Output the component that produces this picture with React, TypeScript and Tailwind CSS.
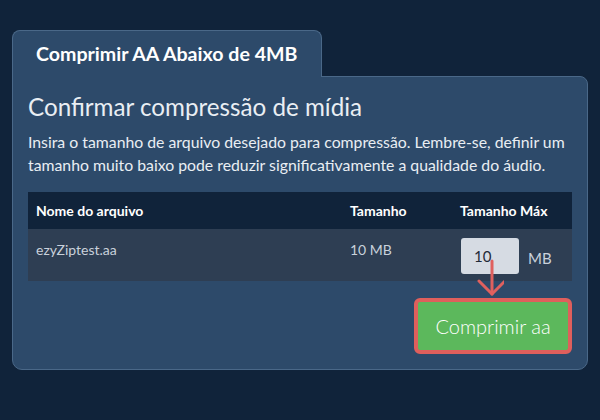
export default function App() {
  return (
    <div
      className="min-h-[420px] bg-[#10233a] px-[12px] pt-[30px] text-[#e9eef3]"
      style={{ fontFamily: "Lato, 'Open Sans', sans-serif" }}
    >
      {/* Tab */}
      <div className="relative z-10 -mb-px flex h-[47px] w-[310px] items-center rounded-t-lg border border-b-0 border-[#4a6888] bg-[#2d4a6a] pl-[23px]">
        <h1 className="text-[19.6px] font-bold text-white">Comprimir AA Abaixo de 4MB</h1>
      </div>

      {/* Panel */}
      <div className="rounded-tr-lg rounded-b-[10px] border border-[#4a6888] bg-[#2d4a6a] px-[15px] pt-[15px] pb-[15px]">
        <h2 className="text-[24.2px] leading-[30px]">Confirmar compressão de mídia</h2>
        <p className="mt-[8px] text-[15.8px] leading-[23px]">
          Insira o tamanho de arquivo desejado para compressão. Lembre-se, definir um tamanho muito
          baixo pode reduzir significativamente a qualidade do áudio.
        </p>

        {/* Table */}
        <div className="mt-[16px] text-[14px]">
          <div className="grid h-[37px] grid-cols-[314px_110px_1fr] items-center bg-[#10233a] font-bold text-white">
            <div className="pl-[8px]">Nome do arquivo</div>
            <div className="pl-[8px]">Tamanho</div>
            <div className="pl-[8px]">Tamanho Máx</div>
          </div>
          <div className="grid h-[52px] grid-cols-[314px_110px_1fr] bg-[#2e3e53] text-[#c9d1db]">
            <div className="pt-[10px] pl-[8px]">ezyZiptest.aa</div>
            <div className="pt-[10px] pl-[8px]">10 MB</div>
            <div className="relative flex items-start pt-[9px] pl-[9px]">
              <div className="flex h-[36px] w-[58px] items-center rounded-[3px] bg-[#d6dbe3] pl-[13px] text-[15px] text-[#1f2a38]">
                10
              </div>
              <span className="ml-[9px] mt-[9px] text-[15px]">MB</span>
              <svg
                className="absolute left-[20px] top-[30px]"
                width="32"
                height="40"
                viewBox="0 0 32 40"
                fill="none"
                stroke="#e0605e"
                strokeWidth="3"
                strokeLinecap="round"
                strokeLinejoin="round"
              >
                <path d="M20 2 V35" />
                <path d="M7 22 L20 35 L33 22" />
              </svg>
            </div>
          </div>
        </div>

        <div className="mt-[17px] flex justify-end">
          <button className="flex h-[56px] w-[158px] items-center justify-center rounded-md border-4 border-[#df5f5c] bg-[#5cb85c] text-[20px] font-light text-white">
            Comprimir aa
          </button>
        </div>
      </div>
    </div>
  );
}
